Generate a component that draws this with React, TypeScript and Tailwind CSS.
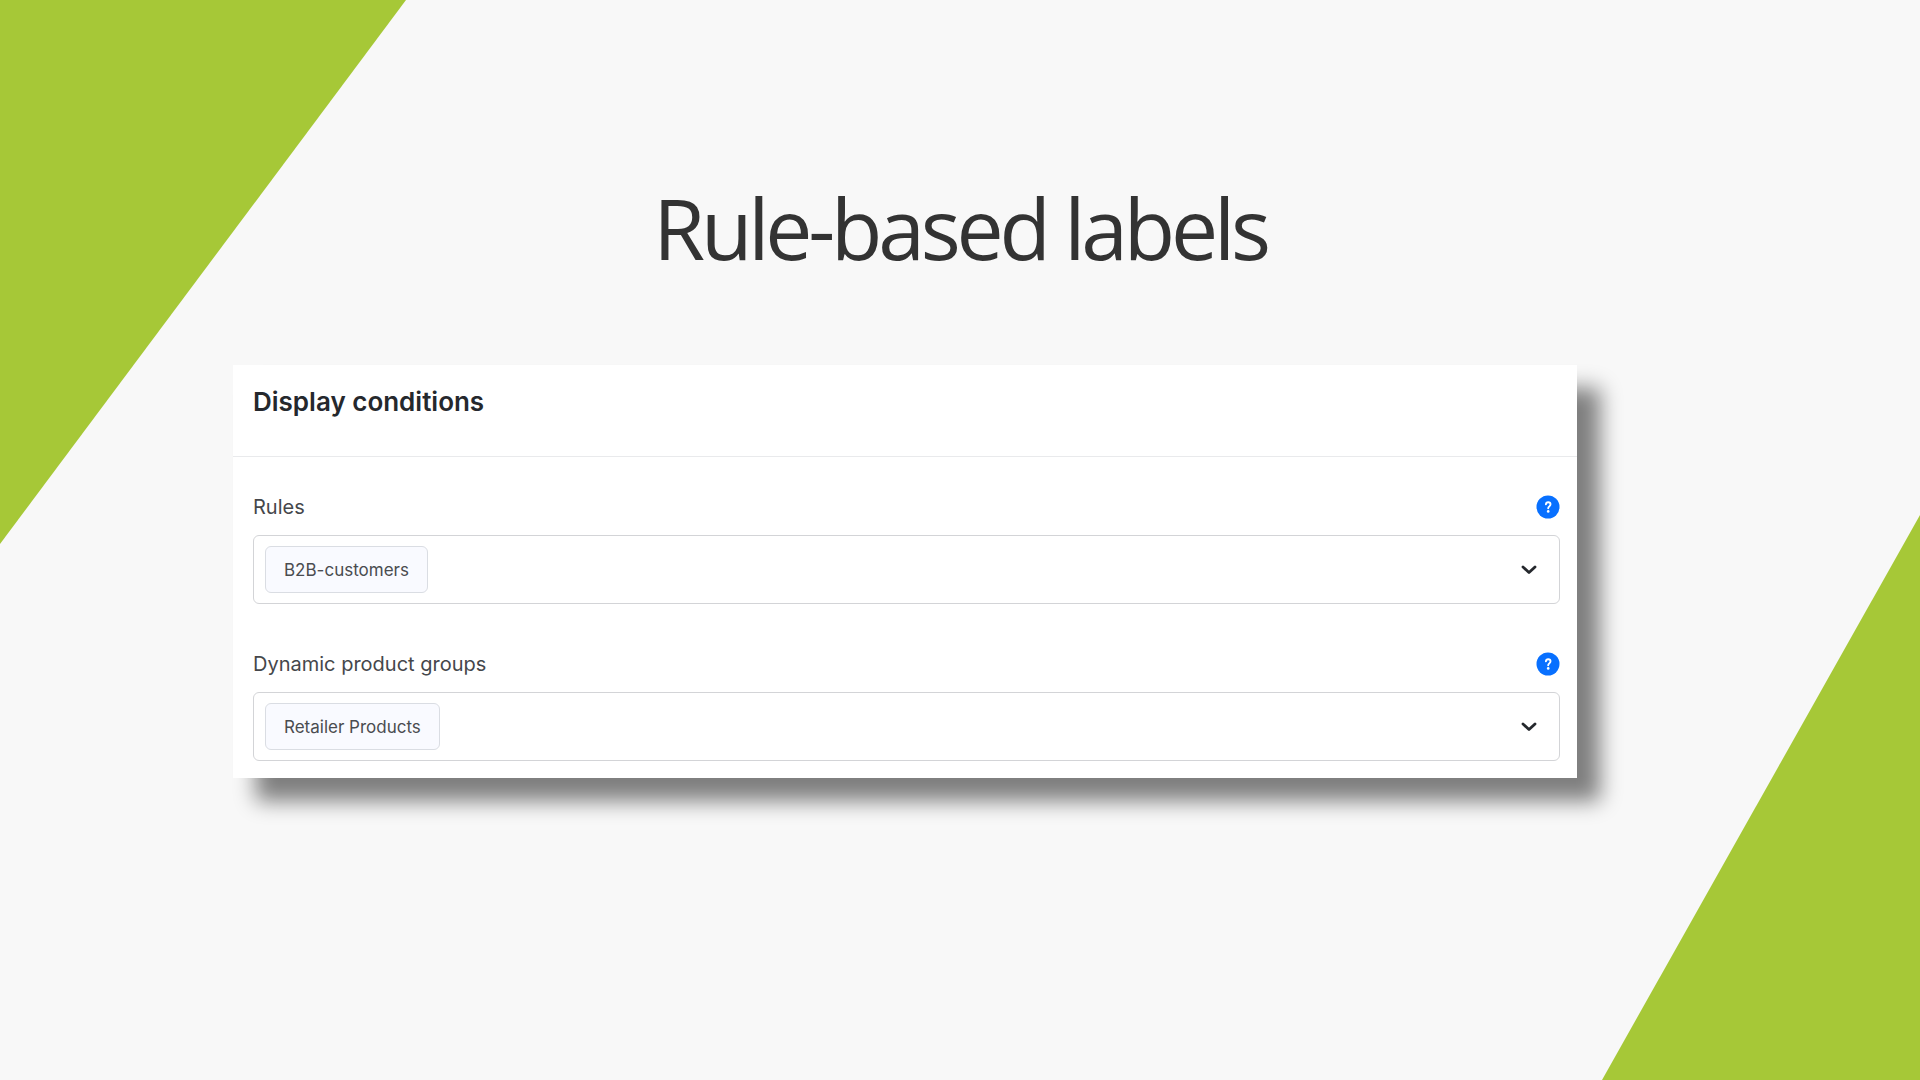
import { useState } from 'react';

type Field = {
    id: string;
    label: string;
    help: string;
    selected: string[];
    options: string[];
};

const fields: Field[] = [
    {
        id: 'rules',
        label: 'Rules',
        help: 'Help for rules',
        selected: ['B2B-customers'],
        options: ['B2B-customers'],
    },
    {
        id: 'product-groups',
        label: 'Dynamic product groups',
        help: 'Help for dynamic product groups',
        selected: ['Retailer Products'],
        options: ['Retailer Products'],
    },
];

function HelpIcon() {
    return (
        <svg viewBox="0 0 24 24" className="w-6 h-6" aria-hidden="true">
            <circle cx="12" cy="12" r="11.5" fill="#0870ff" />
            <path
                d="M9.9 9.3c.2-1.3 1.1-2 2.3-2 1.3 0 2.3.8 2.3 2 0 1-.5 1.5-1.3 2.1-.7.5-1 .9-1 1.9"
                fill="none"
                stroke="white"
                strokeWidth="1.9"
                strokeLinecap="round"
                strokeLinejoin="round"
            />
            <circle cx="12.2" cy="16.4" r="1.3" fill="white" />
        </svg>
    );
}

function Chevron() {
    return (
        <svg viewBox="0 0 16 10" className="absolute right-[22px] top-[29px] w-4 h-[10px] pointer-events-none" aria-hidden="true">
            <path
                d="M2 2l6 5.6L14 2"
                fill="none"
                stroke="#25282d"
                strokeWidth="2.8"
                strokeLinecap="round"
                strokeLinejoin="round"
            />
        </svg>
    );
}

function MultiSelect({ field }: { field: Field }) {
    const [selected, setSelected] = useState(field.selected);

    const toggle = (option: string) => {
        setSelected((current) =>
            current.includes(option) ? current.filter((o) => o !== option) : [...current, option]
        );
    };

    return (
        <div>
            <div className="flex items-center justify-between h-6 mb-4">
                <label htmlFor={field.id} className="text-[20px] leading-6 text-[#45474b]">
                    {field.label}
                </label>
                <button type="button" aria-label={field.help}>
                    <HelpIcon />
                </button>
            </div>
            <div className="relative flex items-center h-[69px] rounded-md border border-[#d3d4d7] bg-white px-[11px]">
                {selected.map((name) => (
                    <span
                        key={name}
                        className="flex items-center h-[47px] px-[18px] rounded-md border border-[#dadde3] bg-[#f9faff] text-[17px] leading-6 text-[#4a4c50]"
                    >
                        {name}
                    </span>
                ))}
                <select
                    id={field.id}
                    value=""
                    onChange={(e) => toggle(e.target.value)}
                    className="flex-1 h-full appearance-none bg-transparent outline-none"
                >
                    <option value="" />
                    {field.options.map((option) => (
                        <option key={option} value={option}>{option}</option>
                    ))}
                </select>
                <Chevron />
            </div>
        </div>
    );
}

export default function App() {
    return (
        <main className="relative min-h-screen overflow-hidden bg-[#f8f8f8]">
            {/* Corner shapes */}
            <svg viewBox="0 0 406 544" className="absolute left-0 top-0 w-[406px] h-[544px]" aria-hidden="true">
                <path d="M0 0H406L0 544z" fill="#a6c837" />
            </svg>
            <svg viewBox="0 0 318 565" className="absolute right-0 bottom-0 w-[318px] h-[565px]" aria-hidden="true">
                <path d="M318 0V565H0z" fill="#a6c837" />
            </svg>

            <div className="relative pt-[172px] pb-20">
                <h1 className="text-center font-['Open_Sans',sans-serif] text-[84px] leading-[112px] tracking-tighter text-[#333333]">
                    Rule-based labels
                </h1>

                <section className="mt-[81px] ml-[233px] mr-[343px] bg-white font-['Inter',sans-serif] shadow-[23px_23px_20px_rgba(0,0,0,0.49)]">
                    <header className="h-[92px] px-5 pt-[21px] border-b border-[#e9eaec]">
                        <h2 className="text-[26px] leading-8 font-semibold text-[#25282d]">Display conditions</h2>
                    </header>
                    <div className="flex flex-col gap-12 pt-[38px] pb-[17px] pl-5 pr-[17px]">
                        {fields.map((field) => (
                            <MultiSelect key={field.id} field={field} />
                        ))}
                    </div>
                </section>
            </div>
        </main>
    );
}
